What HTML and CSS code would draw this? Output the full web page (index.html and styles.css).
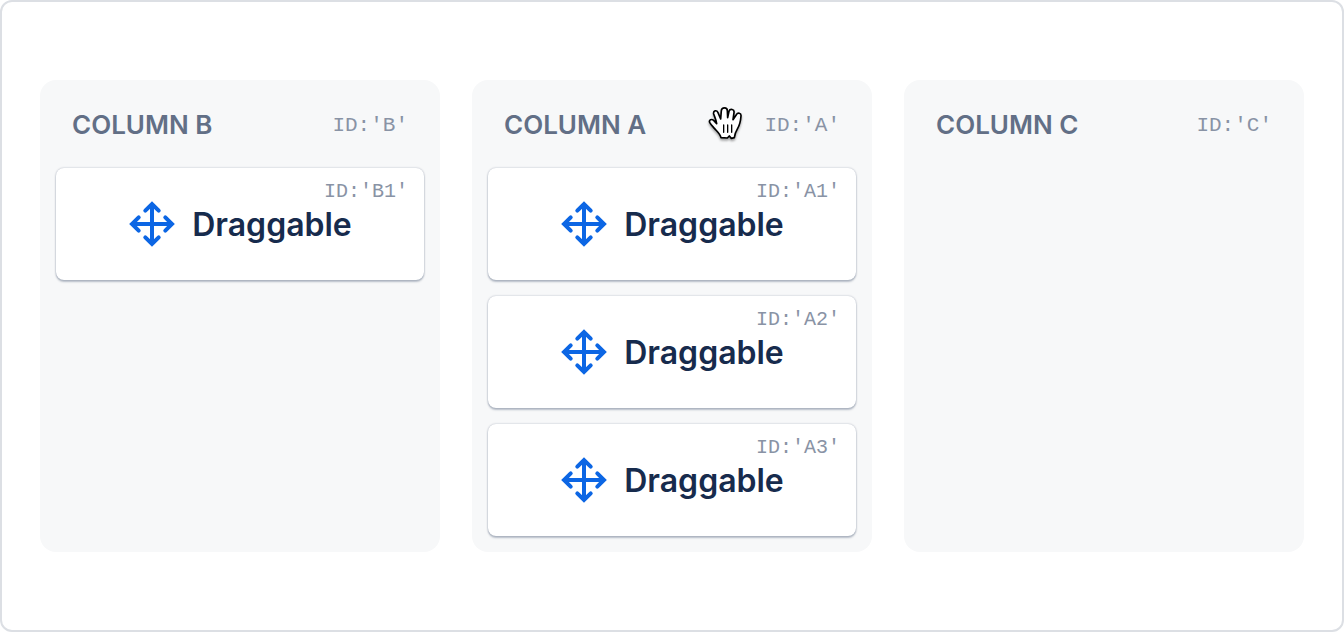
FILE: index.html
```
<!DOCTYPE html>
<html lang="en">

<head>
    <meta charset="UTF-8">
    <meta name="viewport" content="width=device-width, initial-scale=1.0">
    <title>Board</title>
    <link rel="stylesheet" href="styles.css">
</head>

<body>
    <!-- Shared move icon -->
    <svg class="sprite" aria-hidden="true">
        <symbol id="move" viewBox="0 0 48 48">
            <path d="M24 6v36M6 24h36M17.3 10.7l6.7-6.7 6.7 6.7M17.3 37.3l6.7 6.7 6.7-6.7M10.7 17.3l-6.7 6.7 6.7 6.7M37.3 17.3l6.7 6.7-6.7 6.7" />
        </symbol>
    </svg>

    <main class="board">
        <section class="column">
            <header class="column-header">
                <h2>COLUMN B</h2>
                <span class="id">ID:'B'</span>
            </header>
            <div class="card" draggable="true">
                <svg class="icon"><use href="#move" /></svg>
                <span class="label">Draggable</span>
                <span class="id card-id">ID:'B1'</span>
            </div>
        </section>

        <section class="column">
            <header class="column-header">
                <h2>COLUMN A</h2>
                <span class="id">ID:'A'</span>
                <svg class="cursor" viewBox="24 33 108 108" aria-hidden="true">
                    <path class="hand" d="M63 128C60 116 50 108 44 101C38 94 32 88 29 82C26 74 35 71 41 76L50 86C49 76 44 66 41 57C39 46 50 44 54 53L62 72L64 47C65 36 82 36 82 47L83 68L87 49C90 40 104 42 102 53L99 74L109 59C113 52 124 53 123 63C122 76 119 90 113 100C107 110 104 118 103 128L94 130L88 123L82 129Z" />
                    <path class="lines" d="M71 90V112M83 90V112M95 90V112" />
                </svg>
            </header>
            <div class="card" draggable="true">
                <svg class="icon"><use href="#move" /></svg>
                <span class="label">Draggable</span>
                <span class="id card-id">ID:'A1'</span>
            </div>
            <div class="card" draggable="true">
                <svg class="icon"><use href="#move" /></svg>
                <span class="label">Draggable</span>
                <span class="id card-id">ID:'A2'</span>
            </div>
            <div class="card" draggable="true">
                <svg class="icon"><use href="#move" /></svg>
                <span class="label">Draggable</span>
                <span class="id card-id">ID:'A3'</span>
            </div>
        </section>

        <section class="column">
            <header class="column-header">
                <h2>COLUMN C</h2>
                <span class="id">ID:'C'</span>
            </header>
        </section>
    </main>
</body>

</html>
```
FILE: styles.css
```
:root {
    --border: #dcdfe4;
    --surface: #f7f8f9;
    --text: #172b4d;
    --subtle: #626f86;
    --muted: #8993a5;
    --primary: #0c66e4;
}

* {
    margin: 0;
    padding: 0;
    box-sizing: border-box;
}

body {
    background: #fff;
    color: var(--text);
    font-family: 'Inter', sans-serif;
}

.sprite {
    display: none;
}

.board {
    display: grid;
    grid-template-columns: repeat(3, 1fr);
    gap: 32px;
    min-height: 100vh;
    padding: 78px 38px;
    border: 2px solid var(--border);
    border-radius: 12px;
}

.column {
    display: flex;
    flex-direction: column;
    gap: 16px;
    padding: 16px;
    background: var(--surface);
    border-radius: 16px;
}

.column-header {
    position: relative;
    display: flex;
    align-items: center;
    justify-content: space-between;
    height: 56px;
    padding: 2px 16px 0;
}

h2 {
    font-size: 26px;
    font-weight: 600;
    line-height: 32px;
    color: var(--subtle);
}

.id {
    font-family: 'Liberation Mono', monospace;
    font-size: 20px;
    font-weight: 400;
    line-height: 24px;
    color: var(--muted);
}

.column-header .id {
    padding-top: 2px;
    font-size: 21px;
}

.card {
    position: relative;
    display: flex;
    align-items: center;
    justify-content: center;
    gap: 16px;
    height: 112px;
    background: #fff;
    border-radius: 8px;
    box-shadow: 0 0 2px rgba(9, 30, 66, 0.31), 0 2px 2px rgba(9, 30, 66, 0.25);
}

.label {
    padding-top: 2px;
    font-size: 32px;
    font-weight: 600;
    line-height: 40px;
}

.card-id {
    position: absolute;
    top: 12px;
    right: 16px;
}

.icon {
    width: 48px;
    height: 48px;
    fill: none;
    stroke: var(--primary);
    stroke-width: 4;
    stroke-linecap: round;
}

/* Open hand pointer over the column header */
.cursor {
    position: absolute;
    top: 10px;
    right: 112px;
    width: 36px;
    height: 36px;
    overflow: visible;
    filter: drop-shadow(0 2px 1px rgba(0, 0, 0, 0.35));
}

.hand {
    fill: #fff;
    stroke: #000;
    stroke-width: 5;
    stroke-linejoin: round;
}

.lines {
    fill: none;
    stroke: #000;
    stroke-width: 4;
    stroke-linecap: round;
}
```
